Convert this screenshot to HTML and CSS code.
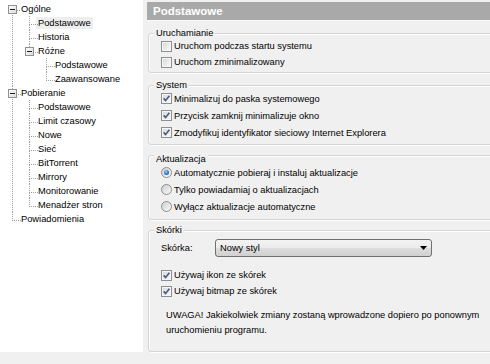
FILE: index.html
```html
<!DOCTYPE html>
<html lang="pl">
<head>
<meta charset="utf-8">
<title>Ustawienia</title>
<link rel="stylesheet" href="styles.css">
</head>
<body>
<div class="window">
  <div class="main">
    <nav class="tree-pane">
      <ul class="tree">
        <li><div class="row"><span class="exp"></span><span class="lbl">Ogólne</span></div>
          <ul>
            <li><div class="row"><span class="lbl sel">Podstawowe</span></div></li>
            <li><div class="row"><span class="lbl">Historia</span></div></li>
            <li class="last"><div class="row"><span class="exp"></span><span class="lbl">Różne</span></div>
              <ul>
                <li><div class="row"><span class="lbl">Podstawowe</span></div></li>
                <li class="last"><div class="row"><span class="lbl">Zaawansowane</span></div></li>
              </ul>
            </li>
          </ul>
        </li>
        <li><div class="row"><span class="exp"></span><span class="lbl">Pobieranie</span></div>
          <ul>
            <li><div class="row"><span class="lbl">Podstawowe</span></div></li>
            <li><div class="row"><span class="lbl">Limit czasowy</span></div></li>
            <li><div class="row"><span class="lbl">Nowe</span></div></li>
            <li><div class="row"><span class="lbl">Sieć</span></div></li>
            <li><div class="row"><span class="lbl">BitTorrent</span></div></li>
            <li><div class="row"><span class="lbl">Mirrory</span></div></li>
            <li><div class="row"><span class="lbl">Monitorowanie</span></div></li>
            <li class="last"><div class="row"><span class="lbl">Menadżer stron</span></div></li>
          </ul>
        </li>
        <li class="last"><div class="row"><span class="lbl">Powiadomienia</span></div></li>
      </ul>
    </nav>

    <section class="pane">
      <div class="title">Podstawowe</div>

      <div class="grp g1">
        <div class="cap">Uruchamianie</div>
        <div class="opt"><span class="cb"></span>Uruchom podczas startu systemu</div>
        <div class="opt"><span class="cb"></span>Uruchom zminimalizowany</div>
      </div>

      <div class="grp g2">
        <div class="cap">System</div>
        <div class="opt"><span class="cb on"><svg width="9" height="9" viewBox="0 0 9 9"><path d="M1.6 4.4 L3.6 6.6 L7.4 1.8" fill="none" stroke="#4a5d88" stroke-width="1.6"/></svg></span>Minimalizuj do paska systemowego</div>
        <div class="opt"><span class="cb on"><svg width="9" height="9" viewBox="0 0 9 9"><path d="M1.6 4.4 L3.6 6.6 L7.4 1.8" fill="none" stroke="#4a5d88" stroke-width="1.6"/></svg></span>Przycisk zamknij minimalizuje okno</div>
        <div class="opt"><span class="cb on"><svg width="9" height="9" viewBox="0 0 9 9"><path d="M1.6 4.4 L3.6 6.6 L7.4 1.8" fill="none" stroke="#4a5d88" stroke-width="1.6"/></svg></span>Zmodyfikuj identyfikator sieciowy Internet Explorera</div>
      </div>

      <div class="grp g3">
        <div class="cap">Aktualizacja</div>
        <div class="opt"><span class="rb on"></span>Automatycznie pobieraj i instaluj aktualizacje</div>
        <div class="opt"><span class="rb"></span>Tylko powiadamiaj o aktualizacjach</div>
        <div class="opt"><span class="rb"></span>Wyłącz aktualizacje automatyczne</div>
      </div>

      <div class="grp g4">
        <div class="cap">Skórki</div>
        <div class="skin-row">
          <span class="skin-lbl">Skórka:</span>
          <div class="combo"><span>Nowy styl</span><svg width="7" height="4" viewBox="0 0 7 4"><path d="M0 0 H7 L3.5 4 Z" fill="#000"/></svg></div>
        </div>
        <div class="opts-skin">
          <div class="opt"><span class="cb on"><svg width="9" height="9" viewBox="0 0 9 9"><path d="M1.6 4.4 L3.6 6.6 L7.4 1.8" fill="none" stroke="#4a5d88" stroke-width="1.6"/></svg></span>Używaj ikon ze skórek</div>
          <div class="opt"><span class="cb on"><svg width="9" height="9" viewBox="0 0 9 9"><path d="M1.6 4.4 L3.6 6.6 L7.4 1.8" fill="none" stroke="#4a5d88" stroke-width="1.6"/></svg></span>Używaj bitmap ze skórek</div>
        </div>
        <p class="note">UWAGA! Jakiekolwiek zmiany zostaną wprowadzone dopiero po ponownym uruchomieniu programu.</p>
      </div>
    </section>
  </div>
  <div class="bottom"></div>
</div>
</body>
</html>
```

FILE: styles.css
```css
* { box-sizing: border-box; }

html, body {
  margin: 0;
  width: 490px;
  height: 364px;
  overflow: hidden;
}

body {
  background: #f0f0f0;
  font-family: "Liberation Sans", Arial, sans-serif;
  font-size: 9.3px;
  color: #000;
}

.window { width: 503px; }

.main {
  display: flex;
  height: 352px;
}

/* ---------- tree ---------- */
.tree-pane {
  flex: none;
  width: 143px;
  background: #fff;
}

.tree, .tree ul {
  list-style: none;
  margin: 0;
  padding: 0;
}

.tree { padding: 2px 0 0 4px; }

.tree li {
  position: relative;
  padding-left: 17px;
}

.tree li::before {
  content: "";
  position: absolute;
  left: 8px;
  top: 0;
  width: 8px;
  height: 8px;
  border-left: 1px dotted #a0a0a0;
  border-bottom: 1px dotted #a0a0a0;
}

.tree > li:first-child::before { border-left: none; }

.tree li:not(.last)::after {
  content: "";
  position: absolute;
  left: 8px;
  top: 8px;
  bottom: 0;
  border-left: 1px dotted #a0a0a0;
}

.row {
  height: 14px;
  line-height: 14px;
  white-space: nowrap;
}

.lbl {
  display: inline-block;
  padding: 0 2px;
  margin-left: -2px;
  line-height: 12px;
}

.lbl.sel { background: #eeeeee; }

.exp {
  position: absolute;
  left: 4px;
  top: 3px;
  width: 9px;
  height: 9px;
  border: 1px solid #919191;
  background: linear-gradient(135deg, #ffffff, #dcdcdc);
  z-index: 1;
}

.exp::after {
  content: "";
  position: absolute;
  left: 1px;
  top: 3px;
  width: 5px;
  height: 1px;
  background: #1e1e1e;
}

/* ---------- settings pane ---------- */
.pane {
  flex: none;
  width: 360px;
  padding: 2px 0 0 4px;
}

.title {
  height: 18px;
  background: #a9a9a9;
  color: #fff;
  font-weight: bold;
  font-size: 11.5px;
  line-height: 18px;
  padding-left: 6px;
  box-shadow: 0 1px 0 #fafafa;
}

.grp {
  margin-left: 1px;
  border: 1px solid #d5d5d5;
  border-radius: 3px;
  padding: 0 12px 2px;
  box-shadow: inset 1px 1px 0 #fff, 1px 1px 0 #fff;
}

.cap {
  width: max-content;
  margin: -6px 0 0 -7px;
  padding: 0 2px;
  line-height: 10px;
  background: #f0f0f0;
}

.opt {
  display: flex;
  align-items: center;
  height: 17px;
  white-space: nowrap;
}

.g1 { margin-top: 13px; padding-bottom: 2px; }
.g1 .opt { height: 16px; }

.g2 { margin-top: 12px; padding-bottom: 3px; }

.g3 { margin-top: 10px; padding-top: 4px; padding-bottom: 4px; }

.g4 { margin-top: 10px; padding-bottom: 13px; }

.cb {
  flex: none;
  display: grid;
  place-items: center;
  width: 11px;
  height: 11px;
  margin-right: 2px;
  border: 1px solid #8e8f8f;
  background: linear-gradient(135deg, #d6d6d6, #fbfbfb);
  box-shadow: inset 0 0 0 1px #f6f6f6;
}

.cb svg { display: block; }

.rb {
  flex: none;
  display: grid;
  place-items: center;
  width: 11px;
  height: 11px;
  margin-right: 2px;
  border: 1px solid #8e8f8f;
  border-radius: 50%;
  background: linear-gradient(135deg, #cfcfcf, #fafafa);
}

.rb.on::after {
  content: "";
  width: 5px;
  height: 5px;
  border-radius: 50%;
  background: radial-gradient(circle at 40% 35%, #9ad6ff 0, #3a86cc 45%, #16437f 100%);
}

.skin-row {
  display: flex;
  align-items: center;
  height: 18px;
  margin-top: 4px;
}

.skin-lbl { width: 54px; flex: none; }

.combo {
  width: 217px;
  height: 18px;
  border: 1px solid #707070;
  border-radius: 3px;
  background: linear-gradient(#f3f3f3 0%, #ebebeb 50%, #dedede 50%, #d0d0d0 100%);
  display: flex;
  align-items: center;
  justify-content: space-between;
  padding: 0 4px;
}

.opts-skin { margin-top: 10px; }
.opts-skin .opt { height: 16px; }

.note {
  margin: 9px 0 0;
  padding-left: 5px;
  width: 340px;
  line-height: 15px;
}

.bottom { height: 12px; }
```
